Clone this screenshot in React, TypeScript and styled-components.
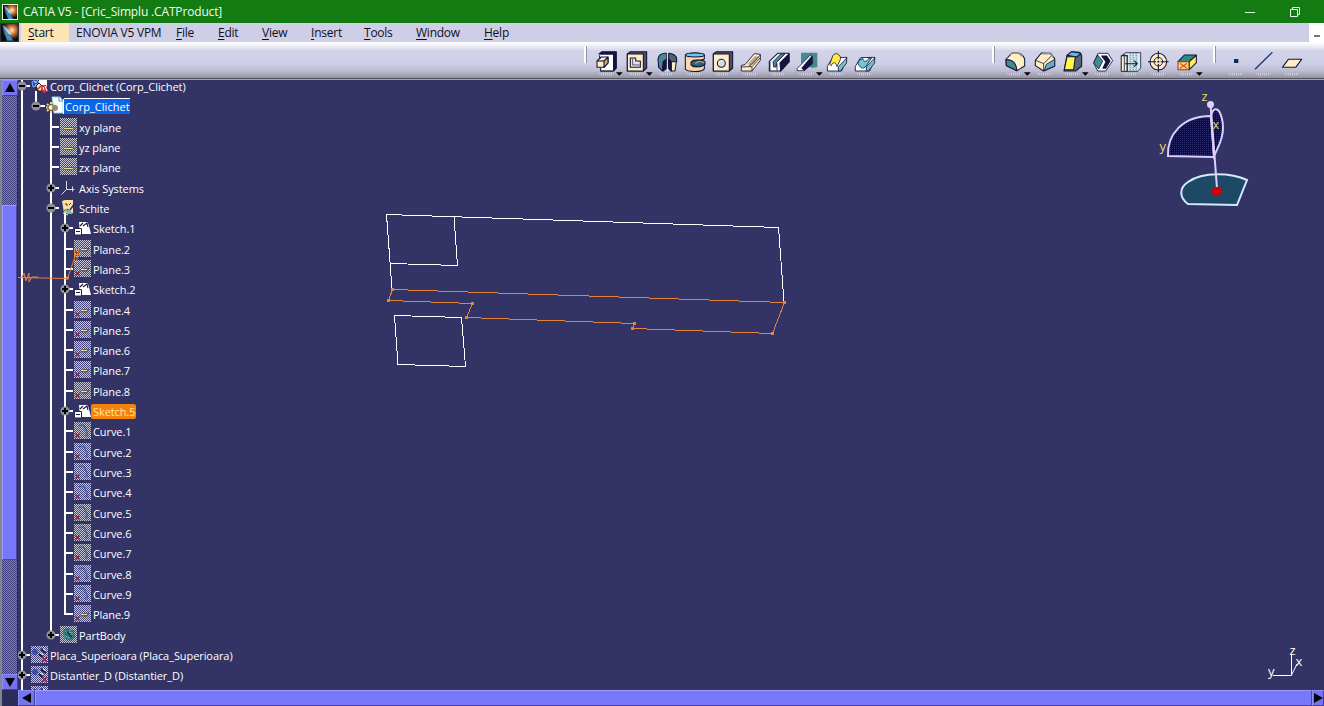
import React from "react";
import styled, { createGlobalStyle, css } from "styled-components";

const GlobalStyle = createGlobalStyle`
  * { box-sizing: border-box; }
  body { margin: 0; background: #333366; overflow: hidden; }
`;

const NAVY = "#14143c";
const CREAM = "#ffeec2";
const TEAL = "#458a90";
const ORANGE = "#e5853c";

const Window = styled.div`
  width: 1324px;
  height: 706px;
  display: flex;
  flex-direction: column;
  overflow: hidden;
  background: #333366;
  font-family: "Open Sans", "Noto Sans", sans-serif;
`;

/* ---------- title bar ---------- */

const TitleBar = styled.header`
  height: 23px;
  flex: none;
  display: flex;
  align-items: center;
  padding-left: 2px;
  background: #127c12;
  color: #f2faf0;
`;

const Title = styled.h1`
  flex: 1;
  margin: 0 0 0 5px;
  font-size: 12px;
  font-weight: 400;
  line-height: 23px;
  letter-spacing: -0.16px;
  white-space: pre;
`;

const WindowControls = styled.div`
  display: flex;
  gap: 35px;
  padding-right: 24px;
  height: 20px;
  align-items: center;
`;

/* ---------- menu ---------- */

const MenuBar = styled.nav`
  height: 19px;
  flex: none;
  display: flex;
  background: #cecee6;
  > svg { margin-right: 2px; }
`;

const MenuItem = styled.div<{ $width: number; $active?: boolean }>`
  width: ${(p) => p.$width}px;
  padding-left: 7px;
  font-size: 12px;
  line-height: 19px;
  letter-spacing: -0.24px;
  white-space: nowrap;
  color: #10101c;
  background: ${(p) => (p.$active ? "#fde4b6" : "transparent")};
  u { text-underline-offset: 2px; }
`;

const MdiButton = styled.div`
  width: 15px;
  height: 19px;
  margin-left: auto;
  padding: 12px 0 0 5px;
  background: #fff;
  &::before {
    content: "";
    display: block;
    width: 6px;
    height: 2px;
    background: #77777f;
  }
`;

/* ---------- toolbar ---------- */

const ToolBar = styled.div`
  height: 38px;
  flex: none;
  display: flex;
  align-items: flex-start;
  background: linear-gradient(#ffffff 0, #f4f4fb 3px, #d3d3e8 9px, #cecee6 22px, #bcbcd2 29px, #9898a8 35px, #8e8e9b 36px, #55555f 36px, #55555f 37px, #a2a2ae 37px);
`;

const ToolGroup = styled.div<{ $lead: number; $gap: number }>`
  display: flex;
  align-items: flex-start;
  margin-left: ${(p) => p.$lead}px;
  padding-top: 4px;
  &::before {
    content: "";
    width: 3px;
    height: 17px;
    margin-right: ${(p) => p.$gap}px;
    background: linear-gradient(90deg, #fff 2px, #9292a0 2px);
  }
`;

const ToolButton = styled.div<{ $menu?: boolean }>`
  width: ${(p) => (p.$menu ? 30 : 28)}px;
  height: 28px;
  padding-top: 3px;
  svg { display: block; overflow: visible; }
`;

type ToolProps = { menu?: boolean; children: React.ReactNode };

const Tool = ({ menu, children }: ToolProps) => (
  <ToolButton $menu={menu}>
    <svg width="30" height="28" viewBox="0 0 90 84" stroke={NAVY} strokeWidth="3.2" strokeLinejoin="round" fill="none">
      <path d="M18 74H62M24 78H58" stroke="#f0f0fa" strokeWidth="2" strokeDasharray="3 3" />
      {children}
      {menu && <path d="M69 70H89L79 80Z" fill="#000" stroke="none" />}
    </svg>
  </ToolButton>
);

/* ---------- work area and scroll bars ---------- */

const WorkArea = styled.div`
  flex: 1;
  display: flex;
  min-height: 0;
`;

const VerticalBar = styled.div`
  width: 18px;
  display: flex;
  flex-direction: column;
  border-left: 2px solid #85858f;
  border-right: 1px solid #2a2a5c;
`;

const HorizontalBar = styled.div`
  height: 16px;
  flex: none;
  display: flex;
  border-left: 2px solid #85858f;
`;

const ArrowButton = styled.div<{ $w: number; $h: number }>`
  width: ${(p) => p.$w}px;
  height: ${(p) => p.$h}px;
  flex: none;
  display: flex;
  align-items: center;
  justify-content: center;
  overflow: hidden;
  background: #7474f2;
  border: 1px solid #8c8cff;
  border-right-color: #44448c;
  border-bottom-color: #44448c;
`;

const Trough = styled.div<{ $size: number }>`
  height: ${(p) => p.$size}px;
  background: repeating-conic-gradient(#7474f4 0 25%, #40407e 0 50%) 0 0 / 2px 2px;
`;

const Thumb = styled.div<{ $size?: number }>`
  ${(p) => (p.$size ? css`height: ${p.$size}px;` : css`flex: 1;`)}
  background: #7878fa;
  border: 1px solid #9c9cff;
  border-bottom-color: #49499a;
  border-right-color: #49499a;
`;

const Corner = styled.div`
  width: 16px;
  background: #2c2c58;
`;

const Viewport = styled.main`
  flex: 1;
  position: relative;
  overflow: hidden;
  background: #333366;
`;

const Scene = styled.svg`
  position: absolute;
  left: -18px;
  top: -80px;
  pointer-events: none;
  text {
    font-family: "Open Sans", "Noto Sans", sans-serif;
    font-size: 13px;
  }
`;

/* ---------- specification tree ---------- */

const TreeList = styled.ul`
  list-style: none;
  margin: -3px 0 0 -2px;
  padding: 0;
`;

/* The row pitch is a little over 20px, so every third row or so is one pixel taller. */
const TreeRow = styled.li<{ $tall: boolean }>`
  height: ${(p) => (p.$tall ? 21 : 20)}px;
  display: flex;
  align-items: stretch;
`;

type Line = "none" | "full" | "top";

const lineHeight: Record<Line, string> = { none: "0", full: "100%", top: "10px" };

const Guide = styled.span<{ $line: Line; $tick?: boolean; $wide?: boolean }>`
  width: ${(p) => (p.$wide ? 15 : 14)}px;
  flex: none;
  padding-top: 4px;
  background:
    linear-gradient(#fff, #fff) 5px 0 / 2px ${(p) => lineHeight[p.$line]} no-repeat,
    linear-gradient(#fff, #fff) 5px 8px / ${(p) => (p.$tick ? "10px 2px" : "0 0")} no-repeat;
`;

const Expander = styled.svg`
  display: block;
  margin-left: 1px;
`;

const IconSlot = styled.span<{ $drop?: boolean }>`
  width: 18px;
  flex: none;
  padding-left: 1px;
  background: linear-gradient(#fff, #fff) 5px 100% / ${(p) => (p.$drop ? "2px 6px" : "0 0")} no-repeat;
  svg { display: block; }
`;

const Label = styled.span<{ $mode?: "edit" | "pick" }>`
  height: 15px;
  margin: 2px 0 0 1px;
  padding: 0 1px;
  font-size: 11px;
  line-height: 15px;
  letter-spacing: -0.08px;
  white-space: pre;
  color: #fff;
  ${(p) =>
    p.$mode === "edit" &&
    css`
      background: #0a66e6;
      box-shadow: 0 -1px 0 #fff, -1px 0 0 #fff;
      padding: 0 0 0 1px;
      letter-spacing: 0.04px;
    `}
  ${(p) =>
    p.$mode === "pick" &&
    css`
      margin-left: 0;
      padding: 0 1px 0 2px;
      background: #f5820a;
      color: #ffe9a8;
      border-radius: 2px;
    `}
`;

const Dots = () => (
  <>
    <rect width="17" height="17" fill="#44447a" />
    <rect width="17" height="17" fill="url(#dither)" />
  </>
);

type IconKind = "product" | "part" | "plane" | "planeX" | "axis" | "set" | "sketch" | "curve" | "body" | "hidden";

const icons: Record<IconKind, React.ReactNode> = {
  product: (
    <>
      <path d="M8 1h8v10H8z" fill="#fff" />
      <path d="M1 5l4-3 3 3-2 4-4 1z" fill="#1d52d2" stroke="#9cc0ff" strokeWidth=".8" />
      <path d="M3 5h3M4 8h3" stroke="#fff" />
      <path d="M5 9l3-3 3 3v5H7z" fill="#ffe9a0" stroke="#222" />
      <path d="M7 12l3-3" stroke="#b03038" strokeWidth="1.5" />
      <path d="M11 8h4l2 6-4 2-3-3z" fill="#d8323e" />
      <path d="M12 10l1 3M14 9l2 5" stroke="#fff" />
    </>
  ),
  part: (
    <>
      <path d="M6 0h8l3 4v12H8z" fill="#fff" stroke="#8fd7e2" />
      <path d="M13 0v4h4" stroke="#479aa6" fill="none" />
      <path d="M5 5v11M0 10.500h10M1 7l8 7M9 7l-8 7" stroke="#efd68c" strokeWidth="2" />
      <circle cx="5" cy="10.500" r="3" fill="#fff1bd" stroke="#4c4224" />
      <circle cx="9" cy="11" r="3" fill="#8e8a84" />
    </>
  ),
  plane: (
    <>
      <Dots />
      <path d="M3 12l3-3h10l-3 3z" fill="#5b5b60" />
      <path d="M4 11l1-1 1 1 1-1 1 1 1-1 1 1 1-1 1 1 1-1" stroke="#e6e08c" fill="none" />
    </>
  ),
  planeX: (
    <>
      <Dots />
      <path d="M6 11l3-3h7l-3 4z" fill="#5b5b60" />
      <path d="M7 10l1-1 1 1 1-1 1 1 1-1 1 1" stroke="#e6e08c" fill="none" />
      <path d="M1.500 11.500l4 4M5.500 11.500l-4 4" stroke="#8c3048" strokeWidth="1.3" />
    </>
  ),
  axis: <path d="M6.500 2v8.500h8M6.500 10.500l-5 5M12.500 7.500v5" stroke="#dcdce8" fill="none" />,
  set: (
    <>
      <path d="M2 2l3-1h8v13H4z" fill="#ffdca4" />
      <path d="M5 5h2v2M9 6l2-2M4 12l4-2 3 4" stroke="#4b3424" fill="none" />
      <path d="M4 10l5 1 4 4H7z" fill="#6dbcc4" />
      <path d="M10 11l5-7" stroke="#1c2d65" strokeWidth="1.4" />
      <path d="M3 14l5 2" stroke="#eee8a0" />
    </>
  ),
  sketch: (
    <>
      <path d="M5 3h9l3 12H6z" fill="#fff" />
      <path d="M.5 9.500h7v6.500h-7z" fill="#fff" stroke="#252545" />
      <path d="M2 12.500h4M6 7l3-3M9 7l4-3 1 4" stroke="#1b1b35" fill="none" strokeWidth="1.1" />
      <path d="M14 2l3 5" stroke="#333366" strokeWidth="2" />
    </>
  ),
  curve: (
    <>
      <Dots />
      <path d="M5 4c5-3 6 2 7 4s3 5-1 6" stroke="#356194" fill="none" strokeWidth="1.7" opacity=".75" />
      <path d="M1.500 11.500l4 4M5.500 11.500l-4 4" stroke="#8c3048" strokeWidth="1.3" />
    </>
  ),
  body: (
    <>
      <Dots />
      <path d="M3 4l5-2 6 3 1 6-5 4-6-3z" fill="#1f6b78" opacity=".8" />
      <path d="M5 5l4 4M10 4v6M4 10l6 2M12 6v6" stroke="#83e6a6" strokeDasharray="1 1" />
      <path d="M7 6l5 5" stroke="#15275f" strokeWidth="1.5" />
    </>
  ),
  hidden: (
    <>
      <Dots />
      <path d="M1 6h6M4 3v6" stroke="#2245ae" strokeWidth="3" opacity=".85" />
      <path d="M8 8l4 3M10 3l5 4" stroke="#20203f" strokeWidth="2.500" />
      <path d="M9 7l3 2M12 3l3 2" stroke="#fff" />
      <path d="M11 11l5 5M16 11l-5 5" stroke="#a92847" strokeWidth="1.4" />
    </>
  ),
};

type NodeSpec = {
  label: string;
  icon: IconKind;
  depth: number;
  toggle?: "+" | "-";
  mode?: "edit" | "pick";
  last?: boolean;
};

const leaf = (label: string, icon: IconKind, last = false): NodeSpec => ({ label, icon, depth: 3, last });
const sketch = (n: number, mode?: "pick"): NodeSpec => ({ label: `Sketch.${n}`, icon: "sketch", depth: 3, toggle: "+", mode });

const nodes: NodeSpec[] = [
  { label: "Corp_Clichet (Corp_Clichet)", icon: "product", depth: 0, toggle: "-" },
  { label: "Corp_Clichet", icon: "part", depth: 1, toggle: "-", mode: "edit", last: true },
  { label: "xy plane", icon: "plane", depth: 2 },
  { label: "yz plane", icon: "plane", depth: 2 },
  { label: "zx plane", icon: "plane", depth: 2 },
  { label: "Axis Systems", icon: "axis", depth: 2, toggle: "+" },
  { label: "Schite", icon: "set", depth: 2, toggle: "-" },
  sketch(1),
  leaf("Plane.2", "planeX"),
  leaf("Plane.3", "planeX"),
  sketch(2),
  ...[4, 5, 6, 7, 8].map((n) => leaf(`Plane.${n}`, "planeX")),
  sketch(5, "pick"),
  ...[1, 2, 3, 4, 5, 6, 7, 8, 9].map((n) => leaf(`Curve.${n}`, "curve")),
  leaf("Plane.9", "planeX", true),
  { label: "PartBody", icon: "body", depth: 2, toggle: "+", last: true },
  { label: "Placa_Superioara (Placa_Superioara)", icon: "hidden", depth: 0, toggle: "+" },
  { label: "Distantier_D (Distantier_D)", icon: "hidden", depth: 0, toggle: "+" },
  { label: "", icon: "hidden", depth: 0 },
];

const tallRows = new Set([1, 4, 7, 10, 14, 17, 20, 23, 26]);

const TreeNode = ({ node, tall }: { node: NodeSpec; tall: boolean }) => {
  const guides = Array.from({ length: node.depth + 1 }, (_, level) => {
    const own = level === node.depth;
    const line: Line = own ? (node.last ? "top" : "full") : level === 1 ? "none" : "full";
    return (
      <Guide key={level} $line={line} $tick={own} $wide={level === 1}>
        {own && node.toggle && (
          <Expander width="10" height="10" viewBox="0 0 10 10">
            <circle cx="5" cy="5" r="4.600" fill="#8e8e98" />
            <path d={node.toggle === "+" ? "M2 5h6M5 2v6" : "M2 5h6"} stroke="#000" strokeWidth="2" />
          </Expander>
        )}
      </Guide>
    );
  });
  return (
    <TreeRow $tall={tall}>
      {guides}
      <IconSlot $drop={node.toggle === "-"}>
        <svg width="17" height="17" viewBox="0 0 17 17" overflow="visible">
          {icons[node.icon]}
        </svg>
      </IconSlot>
      <Label $mode={node.mode}>{node.label}</Label>
    </TreeRow>
  );
};

/* ---------- drawings ---------- */

const Logo = ({ size }: { size: number }) => (
  <svg width={size} height={size} viewBox="0 0 16 16">
    <defs>
      <radialGradient id={`glow${size}`} cx=".62" cy=".38" r=".5">
        <stop offset="0" stopColor="#fff0cc" />
        <stop offset=".4" stopColor="#d87a3a" />
        <stop offset="1" stopColor="#0a0a0c" />
      </radialGradient>
    </defs>
    <rect width="16" height="16" fill={`url(#glow${size})`} />
    <path d="M2 2l5 5 4 8H6L4 9z" fill="#3d88bd" />
    <path d="M2 1l6 6 2 3-3-1z" fill="#b8dcea" />
    <rect x=".5" y=".5" width="15" height="15" fill="none" stroke={size > 16 ? "#30303c" : "#e8f2e8"} />
  </svg>
);

const vertices: [number, number][] = [
  [392, 289], [388, 300], [472, 303], [466, 317], [634, 323], [632, 328], [772, 333], [784, 302],
];

const ModelScene = () => (
  <Scene width="1324" height="706" viewBox="0 0 1324 706" fill="none">
    <defs>
      <pattern id="dither" width="2" height="2" patternUnits="userSpaceOnUse">
        <path d="M0 0h1v1H0zM1 1h1v1H1z" fill="#c6c6d6" />
      </pattern>
      <pattern id="navyDither" width="2" height="2" patternUnits="userSpaceOnUse">
        <path d="M0 0h2v2H0z" fill="#0b0b46" />
        <path d="M0 0h1v1H0z" fill="#2e2e6c" />
      </pattern>
    </defs>
    <g stroke="#fff" strokeWidth="1" shapeRendering="crispEdges">
      <path d="M392 289L386.500 214.500L778.500 227.500L784 302" />
      <path d="M454 217L457.500 265.500L390.500 263.500" />
      <path d="M394.500 315.500L461.500 317.500L465.500 366.500L398 364.500Z" />
    </g>
    <path d={"M" + vertices.map((v) => v.join(" ")).join("L") + "Z"} transform="translate(.5 .5)" stroke={ORANGE} shapeRendering="crispEdges" />
    {vertices.map(([x, y]) => (
      <rect key={x} x={x - 1} y={y - 1} width="3" height="3" fill={ORANGE} />
    ))}
    <g stroke={ORANGE} strokeWidth="1">
      <path d="M18 277.500L67.500 278.500L76 254M22 277l2-4 2 8 3-8 0 9 3-5h6M74.500 249v9M78.500 250l-2 12M74 249.500h6M74 254.500h6" />
      <rect x="66.500" y="277" width="2" height="2" fill={ORANGE} />
    </g>
    <g stroke="#ddd0ff" strokeWidth="2">
      <path d="M1168 156C1167 135 1182 116 1211 116L1214 157Z" fill="url(#navyDither)" />
      <path d="M1211 116C1213 107 1219 106 1222 119C1225 132 1221 142 1214 156Z" fill="url(#navyDither)" />
      <path d="M1188 204C1179 197 1179 188 1188 182C1203 171 1232 173 1247 180L1237 205Z" fill="#1d4967" stroke="#d2eafa" />
      <path d="M1210.500 104L1217 188" />
      <circle cx="1210.500" cy="104.500" r="2.500" fill="#ddd0ff" />
    </g>
    <path d="M1213 187h8l1 5-3 4h-6l-1-5z" fill="#d40000" />
    <g fill="#e8dc68">
      <text x="1201.500" y="101">z</text>
      <text x="1212.500" y="129">x</text>
      <text x="1159.500" y="151">y</text>
    </g>
    <path d="M1273 675.500H1291.500V655M1291.500 675L1297 664" stroke="#fff" />
    <g fill="#fff">
      <text x="1289.500" y="655">z</text>
      <text x="1295.500" y="666">x</text>
      <text x="1268" y="676">y</text>
    </g>
  </Scene>
);

const Pad = () => (
  <Tool menu>
    <path d="M18 15L27 8H70V57L61 66H24V15Z" fill={NAVY} />
    <path d="M20 17H60V65H22Z" fill="#fff" stroke="none" />
    <path d="M20 19V36M23 56V66H61" />
    <path d="M12 36L25 24H45V42L33 55H12Z" fill={CREAM} />
    <path d="M33 36L45 24V42L33 55Z" fill="#c4ad80" />
    <path d="M12 36H33" />
  </Tool>
);

const Block = ({ children }: { children: React.ReactNode }) => (
  <>
    <path d="M13 15L22 8H71V57L61 66H13Z" fill="#4c4c62" />
    <path d="M13 15H61V66H13Z" fill={CREAM} />
    {children}
  </>
);

const Pocket = () => (
  <Tool menu>
    <Block>
      <path d="M22 27H38V36H52V55H22Z" fill="#e4e4ee" />
      <path d="M29 29V48H50" strokeWidth="2" />
    </Block>
  </Tool>
);

const Shaft = () => (
  <Tool>
    <path d="M15 30C17 17 27 12 41 13V42L29 50V66L17 55Z" fill={TEAL} />
    <path d="M47 13C60 13 71 20 71 31V38L47 44Z" fill="#4e6272" />
    <path d="M30 38L41 30V58L30 66Z" fill={NAVY} />
    <path d="M47 30L55 38V66L47 58Z" fill={NAVY} />
    <path d="M55 38H70L66 66H55Z" fill={CREAM} />
    <path d="M43 9V70" stroke="#f2f2ff" strokeWidth="2.500" />
  </Tool>
);

const Groove = () => (
  <Tool>
    <path d="M13 18C13 10 70 10 70 18V30L59 34H36V53H58L70 47V59C65 70 20 70 13 60Z" fill="#f9d8a8" />
    <ellipse cx="42" cy="18" rx="28" ry="6" fill="#6cc6e6" />
    <path d="M30 39C40 31 65 31 72 38V46C64 53 40 56 30 48Z" fill="#286a78" />
    <path d="M43 43C51 36 62 37 70 41" stroke="#f09a70" />
  </Tool>
);

const Hole = () => (
  <Tool>
    <Block>
      <circle cx="37" cy="43" r="12" fill="#d8d8e6" />
      <path d="M29 47C28 38 34 34 42 35" strokeWidth="2" stroke="#fff" />
    </Block>
  </Tool>
);

const Rib = () => (
  <Tool>
    <path d="M13 49L24 47L52 14L70 16V34L45 66H13Z" fill={CREAM} strokeWidth="2.600" />
    <path d="M33 43L54 21L67 24L50 45L36 52Z" fill="#c4ac84" stroke="none" />
    <path d="M13 54L36 53L70 18M45 54V66M36 53H45L70 26" strokeWidth="2.400" />
  </Tool>
);

const Slot = () => (
  <Tool>
    <path d="M13 37L38 13H72V38L47 66H13Z" fill="#fff" />
    <path d="M45 42L72 15V39L47 66Z" fill={NAVY} />
    <path d="M24 38L47 15H60L34 41V54H26Z" fill={TEAL} strokeWidth="2.400" />
    <path d="M15 38V66M36 43V65" strokeWidth="2.400" />
  </Tool>
);

const Stiffener = () => (
  <Tool menu>
    <path d="M24 11H73V54L58 57L24 43Z" fill={TEAL} stroke="none" />
    <path d="M13 58L52 18L59 24V44L31 65H12Z" fill="#fff" strokeWidth="2.400" />
    <path d="M27 57L57 22V44L34 64Z" fill={NAVY} />
  </Tool>
);

const LoftBase = () => (
  <>
    <path d="M13 52L29 26L72 25L56 66H13Z" fill="#fff" strokeWidth="2.600" />
    <path d="M46 53L71 27V42L52 66H46Z" fill="#74bfc6" strokeWidth="2.400" />
  </>
);

const Loft = () => (
  <Tool>
    <LoftBase />
    <path d="M27 27C31 9 48 10 53 27L51 34L42 53C40 38 28 38 25 50L20 46Z" fill="#ffec48" strokeWidth="2.400" />
  </Tool>
);

const RemovedLoft = () => (
  <Tool>
    <LoftBase />
    <path d="M23 35L35 28C38 41 47 39 53 28L62 26L46 50C36 65 25 54 21 43Z" fill="#67c9dc" strokeWidth="2.400" />
  </Tool>
);

const Fillet = () => (
  <Tool menu>
    <path d="M15 31L33 12C52 9 66 15 71 30V51L48 65L16 49Z" fill={CREAM} />
    <path d="M27 17L35 12H52L64 21" stroke="#a09090" strokeWidth="5" />
    <path d="M15 32C34 30 46 42 48 65L16 50Z" fill={TEAL} />
    <path d="M19 28C38 27 50 40 54 60" stroke="#fff" strokeWidth="2.400" />
  </Tool>
);

const Chamfer = () => (
  <Tool>
    <path d="M13 34L31 12L59 13L71 29V52L38 66L13 50Z" fill={CREAM} />
    <path d="M40 64L46 46L71 31V51Z" fill="#65adc8" strokeWidth="2.400" />
    <path d="M14 34L38 44L62 20M38 44V65" strokeWidth="2.400" />
    <path d="M33 14H57L67 24" stroke="#a09090" strokeWidth="4.500" />
  </Tool>
);

const Draft = () => (
  <Tool menu>
    <path d="M24 19L38 8L61 10L68 20V51L50 66H15Z" fill="#5a6674" />
    <path d="M24 19L38 8L66 13L53 24Z" fill="#5cc0e4" />
    <path d="M24 23H49L44 62H16Z" fill="#fff84a" />
  </Tool>
);

const Shell = () => (
  <Tool>
    <path d="M14 42L27 13H57L71 35L50 66H26Z" fill="#fff" strokeWidth="2.600" />
    <path d="M14 41L26 18L41 36L29 60Z" fill={TEAL} strokeWidth="2.400" />
    <path d="M38 21H53L63 36L50 58H42L51 38Z" fill={NAVY} />
  </Tool>
);

const Thickness = () => (
  <Tool>
    <path d="M13 20L27 11H71V57L62 67H13Z" fill="#d4edf0" strokeWidth="2.400" />
    <path d="M13 20H30V67H13Z" fill={CREAM} strokeWidth="2.400" />
    <path d="M40 13V65M49 13V66M58 13V66" stroke="#60929a" strokeDasharray="3 3" strokeWidth="5" />
    <path d="M22 15V66M31 18V67M15 20H32" strokeWidth="2.400" />
    <path d="M24 44H60M51 35L61 44L51 53" />
  </Tool>
);

const ThreadTap = () => (
  <Tool>
    <circle cx="40" cy="38" r="25" fill={CREAM} />
    <circle cx="40" cy="38" r="13" fill="#f8e5c1" strokeWidth="2.600" />
    <path d="M40 6V31M40 45V70M9 38H33M47 38H71M37 38H43M40 35V41" />
  </Tool>
);

const RemoveFace = () => (
  <Tool menu>
    <path d="M15 38L34 18H70L49 38Z" fill="#2e8c7c" />
    <path d="M49 38L70 19V41L49 62Z" fill="#fff04c" />
    <path d="M15 38H48V62H15Z" fill="#ffd07c" stroke="#9a3c16" />
    <path d="M21 43L42 58M42 43L21 58" stroke="#c04816" />
  </Tool>
);

const menus: { key: string; rest: string; width: number; active?: boolean }[] = [
  { key: "S", rest: "tart", width: 48, active: true },
  { key: "", rest: "ENOVIA V5 VPM", width: 100 },
  { key: "F", rest: "ile", width: 42 },
  { key: "E", rest: "dit", width: 44 },
  { key: "V", rest: "iew", width: 49 },
  { key: "I", rest: "nsert", width: 53 },
  { key: "T", rest: "ools", width: 52 },
  { key: "W", rest: "indow", width: 68 },
  { key: "H", rest: "elp", width: 60 },
];

const arrows = { up: "M5 0L10 9H0Z", down: "M0 1H10L5 10Z", left: "M0 5L9 0V10Z", right: "M1 0L10 5L1 10Z" };

const Arrow = ({ dir, w = 16, h = 16 }: { dir: keyof typeof arrows; w?: number; h?: number }) => (
  <ArrowButton $w={w} $h={h}>
    <svg width="10" height="10" viewBox="0 0 10 10">
      <path d={arrows[dir]} fill="#050510" />
    </svg>
  </ArrowButton>
);

export default function App() {
  return (
    <Window>
      <GlobalStyle />
      <TitleBar>
        <Logo size={16} />
        <Title>CATIA V5 - [Cric_Simplu .CATProduct]</Title>
        <WindowControls>
          <svg width="10" height="10" viewBox="0 0 10 10">
            <path d="M0 5.500H10" stroke="#e8f6e8" />
          </svg>
          <svg width="10" height="10" viewBox="0 0 10 10" fill="none" stroke="#e8f6e8">
            <path d="M.5 2.500h7v7h-7zM2.500 2.500v-2h7v7h-2" />
          </svg>
        </WindowControls>
      </TitleBar>
      <MenuBar>
        <Logo size={19} />
        {menus.map((m) => (
          <MenuItem key={m.rest} $width={m.width} $active={m.active}>
            {m.key && <u>{m.key}</u>}
            {m.rest}
          </MenuItem>
        ))}
        <MdiButton />
      </MenuBar>
      <ToolBar>
        <ToolGroup $lead={584} $gap={6}>
          <Pad />
          <Pocket />
          <Shaft />
          <Groove />
          <Hole />
          <Rib />
          <Slot />
          <Stiffener />
          <Loft />
          <RemovedLoft />
        </ToolGroup>
        <ToolGroup $lead={113} $gap={6}>
          <Fillet />
          <Chamfer />
          <Draft />
          <Shell />
          <Thickness />
          <ThreadTap />
          <RemoveFace />
        </ToolGroup>
        <ToolGroup $lead={10} $gap={6}>
          <Tool>
            <rect x="36" y="30" width="13" height="12" fill="#102c5c" stroke="none" />
          </Tool>
          <Tool>
            <path d="M15 61L67 10" stroke="#163a78" strokeWidth="4" />
          </Tool>
          <Tool>
            <path d="M13 55L31 31H71L53 55Z" fill={CREAM} />
          </Tool>
        </ToolGroup>
      </ToolBar>
      <WorkArea>
        <VerticalBar>
          <Arrow dir="up" />
          <Trough $size={109} />
          <Thumb $size={355} />
          <Trough $size={114} />
          <Arrow dir="down" />
        </VerticalBar>
        <Viewport>
          <TreeList>
            {nodes.map((n, i) => (
              <TreeNode key={i} node={n} tall={tallRows.has(i)} />
            ))}
          </TreeList>
          <ModelScene />
        </Viewport>
      </WorkArea>
      <HorizontalBar>
        <Corner />
        <Arrow dir="left" w={17} />
        <Thumb />
        <Arrow dir="right" w={12} />
      </HorizontalBar>
    </Window>
  );
}
